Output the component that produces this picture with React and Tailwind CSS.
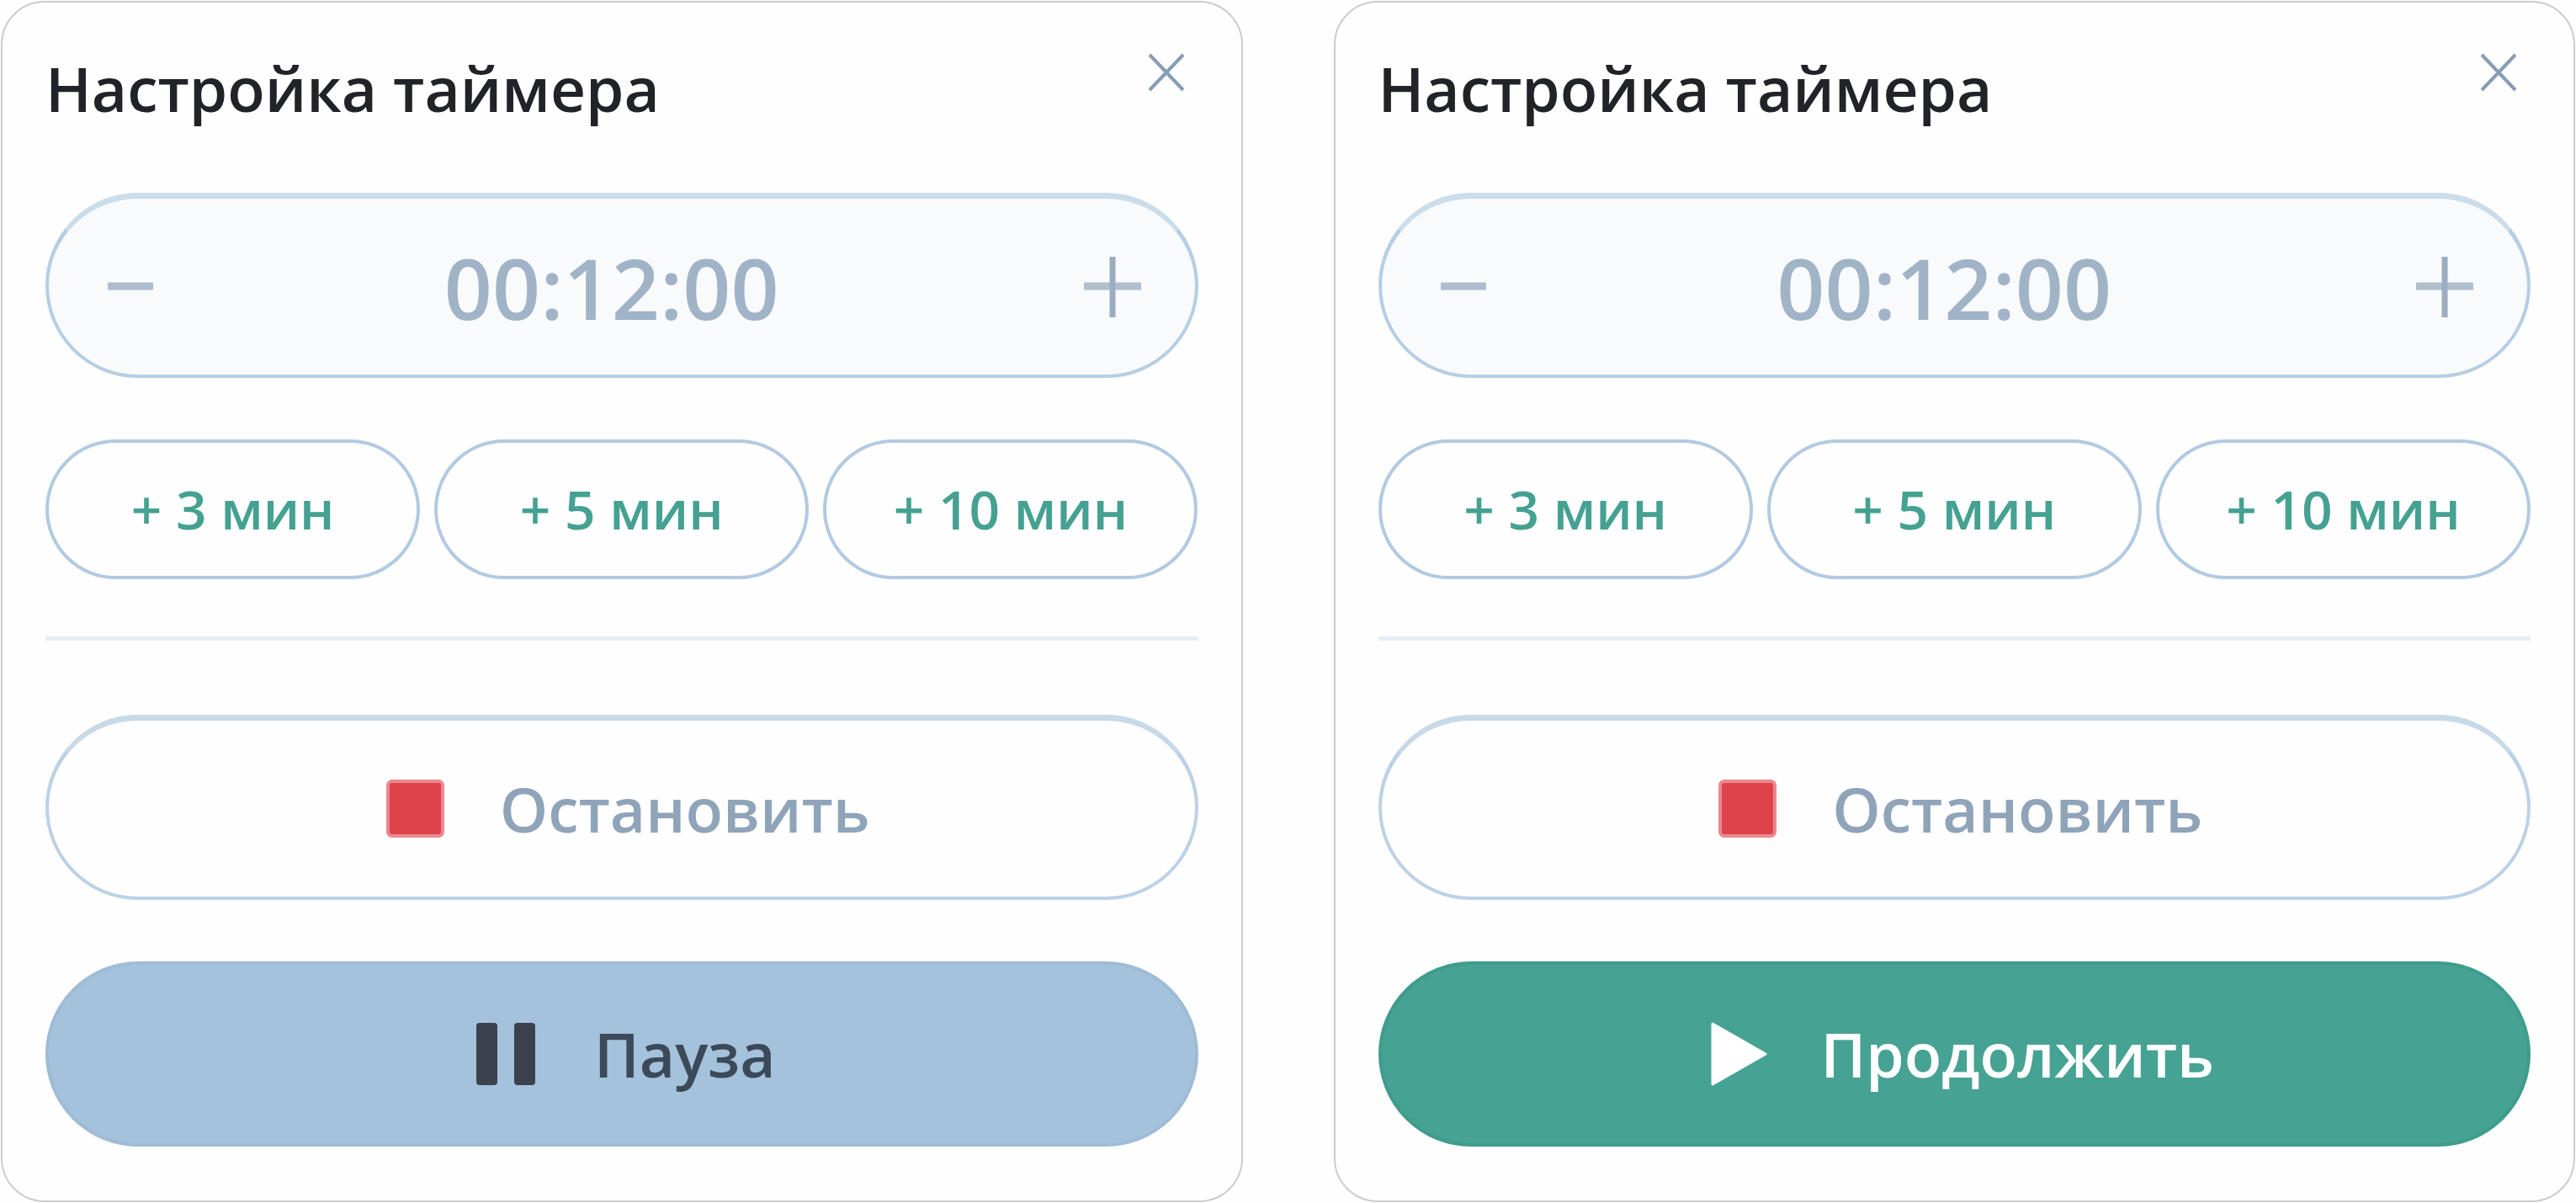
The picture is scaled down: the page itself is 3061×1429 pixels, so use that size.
import React from "react";

const presets = [3, 5, 10];

const StopIcon = () => (
  <svg className="h-[88px] w-[88px]" viewBox="0 0 88 88" aria-hidden="true">
    <rect x="15" y="9" width="69" height="69" rx="7" fill="#e9898f" />
    <rect x="19" y="13" width="61" height="61" rx="3" fill="#de434b" />
  </svg>
);

const PauseIcon = () => (
  <svg className="h-[88px] w-[88px]" viewBox="0 0 88 88" aria-hidden="true">
    <rect x="10" y="7" width="25" height="74" rx="4" fill="#3a424d" />
    <rect x="55" y="7" width="25" height="74" rx="4" fill="#3a424d" />
  </svg>
);

const PlayIcon = () => (
  <svg className="h-[88px] w-[88px]" viewBox="0 0 88 88" aria-hidden="true">
    <path
      d="M22 8L85 44L22 80Z"
      fill="#ffffff"
      stroke="#ffffff"
      strokeWidth="3"
      strokeLinejoin="round"
    />
  </svg>
);

const TimerCard = ({ id, running }) => {
  return (
    <section
      aria-labelledby={`${id}-title`}
      className="rounded-[52px] border-2 border-[#cccccc] bg-[#fefefe] px-[51px] pt-[50px] pb-16"
    >
      <div className="flex items-start justify-between">
        <h2
          id={`${id}-title`}
          className="text-[73px] leading-[104px] font-semibold text-[#212328]"
        >
          Настройка таймера
        </h2>
        <button type="button" aria-label="Закрыть" className="mt-2 mr-3.5">
          <svg className="h-12 w-12" viewBox="0 0 48 48" fill="none" aria-hidden="true">
            <path d="M4 4L44 46M44 4L4 46" stroke="#869db5" strokeWidth="4" />
          </svg>
        </button>
      </div>

      <div className="mt-[72px] flex h-[220px] items-center rounded-full border-4 border-t-[7px] border-[#b6cee3] border-t-[#cbdcea] bg-[#f8fafc] pr-12 pl-[70px]">
        <button type="button" aria-label="Уменьшить время">
          <svg className="h-[72px] w-[54px]" viewBox="0 0 54 72" aria-hidden="true">
            <path d="M0 35H54" stroke="#adbdcd" strokeWidth="9" />
          </svg>
        </button>
        <input
          type="text"
          aria-label="Время таймера"
          defaultValue="00:12:00"
          className="min-w-0 flex-1 bg-transparent text-center text-[100px] leading-[136px] font-semibold text-[#a1b3c7] outline-none"
        />
        <button type="button" aria-label="Увеличить время" className="px-4">
          <svg className="h-[72px] w-[68px]" viewBox="0 0 68 72" aria-hidden="true">
            <path d="M0 35H68" stroke="#b0bfce" strokeWidth="9" />
            <path d="M34 0V72" stroke="#9aadc1" strokeWidth="7" />
          </svg>
        </button>
      </div>

      <div className="mt-[73px] grid grid-cols-3 gap-[17px]">
        {presets.map((minutes) => (
          <button
            key={minutes}
            type="button"
            className="h-[166px] rounded-full border-4 border-[#b2cae1] text-[64px] leading-[88px] font-semibold text-[#45a191]"
          >
            + {minutes} мин
          </button>
        ))}
      </div>

      <hr className="mt-[68px] border-t-[5px] border-[#e6eef4]" />

      <div className="mt-[88px] flex flex-col gap-[73px]">
        <button
          type="button"
          className="flex h-[220px] items-center justify-center gap-[62px] rounded-full border-4 border-t-[7px] border-[#bcd1e5] border-t-[#c8d9e8] text-[73px] leading-[104px] font-semibold text-[#8fa4b9]"
        >
          <StopIcon />
          Остановить
        </button>
        {running ? (
          <button
            type="button"
            className="flex h-[220px] items-center justify-center gap-[62px] rounded-full border-4 border-[#9fbbd6] bg-[#a5c2dd] text-[73px] leading-[104px] font-semibold text-[#3b4958]"
          >
            <PauseIcon />
            Пауза
          </button>
        ) : (
          <button
            type="button"
            className="flex h-[220px] items-center justify-center gap-[62px] rounded-full border-4 border-[#3f9c8c] bg-[#46a293] text-[73px] leading-[104px] font-semibold text-white"
          >
            <PlayIcon />
            Продолжить
          </button>
        )}
      </div>
    </section>
  );
};

const App = () => {
  return (
    <main className="grid grid-cols-2 items-start gap-[108px] bg-[#fefefe] p-px font-['Open_Sans',sans-serif]">
      <TimerCard id="running" running />
      <TimerCard id="paused" running={false} />
    </main>
  );
};

export default App;
